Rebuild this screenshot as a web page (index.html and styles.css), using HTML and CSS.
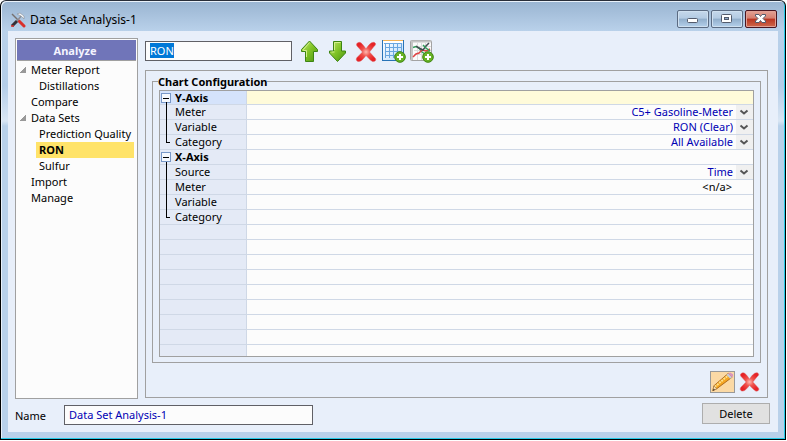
FILE: index.html
```html
<!DOCTYPE html>
<html lang="en">
<head>
<meta charset="utf-8">
<title>Data Set Analysis-1</title>
<link rel="stylesheet" href="styles.css">
</head>
<body>
<svg class="defs" aria-hidden="true">
  <defs>
    <linearGradient id="green" x1="0" y1="0" x2="1" y2="1"><stop offset="0" stop-color="#c4e86a"/><stop offset=".5" stop-color="#7fc225"/><stop offset="1" stop-color="#4a9412"/></linearGradient>
    <radialGradient id="red"><stop offset="0" stop-color="#ffb9b0"/><stop offset=".45" stop-color="#f0524c"/><stop offset="1" stop-color="#e62226"/></radialGradient>
    <linearGradient id="sheet" x1="0" y1="0" x2="1" y2="1"><stop offset="0" stop-color="#ffffff"/><stop offset="1" stop-color="#b9dcfb"/></linearGradient>
    <symbol id="cross" viewBox="0 0 22 22"><path d="M3.500 1.500C6 .5 8.500 4.500 11 8C13.500 4 16.500 .5 19.500 1.500C21.500 3 20.500 4 18.500 6L14.500 11L20.500 17.500C21.500 19.500 19.500 21 17.500 20.500C15 19 13 16.500 11 14.500C9 17 6.500 20.500 4 20.500C1.500 20.500 .5 18.500 2 16.500L7.500 11L2 5C1 3.500 1.500 2 3.500 1.500Z" fill="url(#red)" stroke="#dc5a5c" stroke-width=".5"/></symbol>
    <symbol id="plus" viewBox="0 0 12 12"><circle cx="6" cy="6" r="5.300" fill="#67b224" stroke="#3f8511"/><path d="M6 3V9M3 6H9" stroke="#fff" stroke-width="2"/></symbol>
  </defs>
</svg>
<div class="window">
  <header class="titlebar">
    <svg class="app-icon" viewBox="0 0 16 16" aria-hidden="true">
      <path d="M2 2L10 10" stroke="#77716f" stroke-width="1.500"/>
      <path d="M9 9L14 14" stroke="#d9302c" stroke-width="3" stroke-linecap="round"/>
      <path d="M12 3L7 9" stroke="#8c8f96" stroke-width="1.500"/>
      <path d="M7 9L2 14" stroke="#343037" stroke-width="3"/>
      <path d="M1 14H4" stroke="#d9302c" stroke-width="1.500"/>
      <path d="M7 2L10 1L14 4V7L11 4Z" fill="#f4f6f8" stroke="#888e98" stroke-width=".6"/>
    </svg>
    <h1>Data Set Analysis-1</h1>
    <div class="window-buttons">
      <button type="button" aria-label="Minimize"><svg viewBox="0 0 30 16"><rect x="9.500" y="7.500" width="10" height="4" rx="1" fill="#fff" stroke="#535b6c"/></svg></button>
      <button type="button" aria-label="Maximize"><svg viewBox="0 0 30 16"><rect x="9.500" y="3.500" width="10" height="8" rx="1" fill="#fff" stroke="#535b6c"/><rect x="12.500" y="6.500" width="4" height="2" fill="#8fa9c8" stroke="#535b6c"/></svg></button>
      <button type="button" class="close" aria-label="Close"><svg viewBox="0 0 30 16"><path d="M9.500 3.500H13L14.500 5.500L16 3.500H19.500V5L17 7.500L19.500 10V11.500H16L14.500 9.500L13 11.500H9.500V10L12 7.500L9.500 5Z" fill="#fff" stroke="#535b6c"/></svg></button>
    </div>
  </header>
  <div class="client">
    <div class="workspace">
      <nav class="sidebar" aria-label="Analyze">
        <h2>Analyze</h2>
        <ul>
          <li><a class="parent" href="#meter-report">Meter Report</a>
            <ul><li><a href="#distillations">Distillations</a></li></ul></li>
          <li><a href="#compare">Compare</a></li>
          <li><a class="parent" href="#data-sets">Data Sets</a>
            <ul>
              <li><a href="#prediction-quality">Prediction Quality</a></li>
              <li><a class="selected" aria-current="page" href="#ron">RON</a></li>
              <li><a href="#sulfur">Sulfur</a></li>
            </ul></li>
          <li><a href="#import">Import</a></li>
          <li><a href="#manage">Manage</a></li>
        </ul>
      </nav>
      <main>
        <div class="toolbar">
          <div class="textbox"><input type="text" class="ghost" aria-label="Data set name" value="RON"></div>
          <div class="tools">
            <button type="button" aria-label="Move up"><svg viewBox="0 0 24 24"><path d="M11.500 2L19.500 10.500V12.500H15.500V22.500H7.500V12.500H3.500V10.500Z" fill="url(#green)" stroke="#3d8512"/><path d="M11.500 3.500L5.500 10.500V11.500H8.500V18" fill="none" stroke="#d4ef8e"/></svg></button>
            <button type="button" aria-label="Move down"><svg viewBox="0 0 24 24"><path d="M11.500 22.500L19.500 14V12H15.500V2.500H7.500V12H3.500V14Z" fill="url(#green)" stroke="#3d8512"/><path d="M8.500 11V3.500H14.500M8.500 13H5.500" fill="none" stroke="#d4ef8e"/></svg></button>
            <button type="button" aria-label="Remove"><svg viewBox="0 0 24 24"><use href="#cross" x="1" y="2" width="22" height="22"/></svg></button>
            <button type="button" aria-label="Add table"><svg viewBox="0 0 24 24"><rect x=".5" y="1.500" width="21" height="20" fill="url(#sheet)" stroke="#2873b6"/><path d="M1 1.500H21" stroke="#f4b455"/><path d="M1 3H21" stroke="#fff" stroke-width="2"/><path d="M2 4.500H20M3.500 8.500H19.500M3.500 12.500H19.500M3.500 16.500H19.500M3.500 5V19M7.500 5V19M11.500 5V19M15.500 5V19M19.500 5V19" stroke="#69a6df"/><use href="#plus" x="12" y="12" width="12" height="12"/></svg></button>
            <button type="button" aria-label="Add chart"><svg viewBox="0 0 24 24"><rect x=".5" y="1.500" width="21" height="20" rx="1" fill="#fbfbfb" stroke="#a3a3a3"/><path d="M1 2.500H21M2 3V21" stroke="#c5c5c5" stroke-width="2"/><path d="M4 7.500H21M4 11.500H21M4 15.500H21M7.500 4V21M11.500 4V21M15.500 4V21" stroke="#ddd"/><path d="M3 8.500L6 7.500L9 9L12 13L15 15" fill="none" stroke="#32a05c" stroke-width="1.500"/><path d="M3 18L6 15L9 14L12 11L16 12L20 10" fill="none" stroke="#e14343" stroke-width="1.500"/><path d="M6 7L9 9L13 11L16 7L19 4" fill="none" stroke="#454b52" stroke-width="1.500"/><path d="M13 6L16 9L20 12" fill="none" stroke="#32a05c" stroke-width="1.500"/><use href="#plus" x="12" y="12" width="12" height="12"/></svg></button>
          </div>
        </div>
        <section class="panel">
          <fieldset>
            <legend>Chart Configuration</legend>
            <div class="grid">
              <table>
                <colgroup><col class="names"><col></colgroup>
                <tbody>
                <tr class="group current"><th><button type="button" class="toggle" aria-label="Collapse Y-Axis"></button>Y-Axis</th><td></td></tr>
                <tr class="child"><th><label for="y-meter">Meter</label></th><td><select id="y-meter"><option>C5+ Gasoline-Meter</option></select></td></tr>
                <tr class="child"><th><label for="y-variable">Variable</label></th><td><select id="y-variable"><option>RON (Clear)</option></select></td></tr>
                <tr class="child last"><th><label for="y-category">Category</label></th><td><select id="y-category"><option>All Available</option></select></td></tr>
                <tr class="group"><th><button type="button" class="toggle" aria-label="Collapse X-Axis"></button>X-Axis</th><td></td></tr>
                <tr class="child"><th><label for="x-source">Source</label></th><td><select id="x-source"><option>Time</option></select></td></tr>
                <tr class="child"><th>Meter</th><td class="plain">&lt;n/a&gt;</td></tr>
                <tr class="child"><th>Variable</th><td></td></tr>
                <tr class="child last"><th>Category</th><td></td></tr>
                <tr><th></th><td></td></tr>
                <tr><th></th><td></td></tr>
                <tr><th></th><td></td></tr>
                <tr><th></th><td></td></tr>
                <tr><th></th><td></td></tr>
                <tr><th></th><td></td></tr>
                <tr><th></th><td></td></tr>
                <tr><th></th><td></td></tr>
                <tr><th></th><td></td></tr>
                </tbody>
              </table>
            </div>
          </fieldset>
          <div class="panel-actions">
            <button type="button" class="edit" aria-label="Edit"><svg viewBox="0 0 24 20"><path d="M2 19L3 14L18 1L22 5L6 17Z" fill="#f5a623" stroke="#ad6a1c"/><path d="M4 15L18 3" stroke="#ffe08a" stroke-width="2" stroke-dasharray="2 1"/><path d="M2 19L3 14L6 17Z" fill="#f5dfb4" stroke="#906030" stroke-width=".5"/><path d="M1.500 19.500L3 17L4 18Z" fill="#222"/><path d="M16 2.500L18 1L22 5L20 6.500Z" fill="#c5cbd8"/><path d="M18 1L20 0L23 2V4L22 5Z" fill="#d995bd"/></svg></button>
            <button type="button" class="discard" aria-label="Discard"><svg viewBox="0 0 22 22"><use href="#cross" width="22" height="22"/></svg></button>
          </div>
        </section>
      </main>
    </div>
    <footer>
      <label for="name">Name</label>
      <input type="text" id="name" value="Data Set Analysis-1">
      <button type="button" class="delete">Delete</button>
    </footer>
  </div>
</div>
<script src="app.js"></script>
</body>
</html>
```
FILE: app.js
```js
const field = document.querySelector(".ghost");
field.focus();
field.select();
```
FILE: styles.css
```css
* { box-sizing: border-box; }

body {
  display: flex;
  height: 100vh;
  margin: 0;
  padding: 0 1px 1px 0;
  background: #fff;
  color: #000;
  font: 11px/15px "Noto Sans", "Open Sans", sans-serif;
}

button, input, select { margin: 0; font: inherit; }
button { padding: 0; border: 0; background: none; }
svg { display: block; }
h1, h2, ul { margin: 0; padding: 0; font-weight: normal; }
ul { list-style: none; }
.defs { position: absolute; width: 0; height: 0; }

.window {
  display: flex;
  flex: 1;
  flex-direction: column;
  min-width: 0;
  padding: 0 7px 7px 7px;
  border: 1px solid #000;
  border-top-color: #282d38;
  border-radius: 6px 6px 0 0;
  background: linear-gradient(#99b4d1 0, #b9d1ea 30px, #b4cde8 85px, #d9e6f4 120px, #b9d1ea 125px);
  box-shadow: inset -1px -1px #26cbe8, inset 1px 1px #e9f1fa;
}

.titlebar {
  display: flex;
  align-items: center;
  height: 30px;
  padding: 8px 1px 0 2px;
  gap: 4px;
}
.titlebar h1 { flex: 1; font-size: 12px; line-height: 22px; }
.app-icon { width: 16px; height: 16px; }

.window-buttons { display: flex; margin-bottom: 2px; gap: 2px; }
.window-buttons button {
  width: 32px;
  height: 18px;
  border: 1px solid #5b6b82;
  border-radius: 2px;
  background: linear-gradient(#c5d8eb 0, #b3cbe3 45%, #91aecb 50%, #b4d0eb 100%);
  box-shadow: inset 0 0 0 1px #cfe0f0;
}
.window-buttons .close {
  border-color: #4a1520;
  background: linear-gradient(#e3a295 0, #d67e6f 45%, #b93420 50%, #cf694d 100%);
  box-shadow: inset 0 0 0 1px #e0a095;
}
.window-buttons svg { width: 30px; height: 16px; }

.client {
  display: flex;
  flex: 1;
  flex-direction: column;
  min-height: 0;
  padding: 7px 9px 7px 7px;
  background: #e8effa;
}
.workspace { display: flex; flex: 1; gap: 7px; min-height: 0; }

.sidebar {
  width: 123px;
  padding: 1px;
  border: 1px solid #a0a0a0;
  background: #fcfcfc;
}
.sidebar h2 {
  height: 21px;
  margin-bottom: 1px;
  border-bottom: 1px solid #a0a0a0;
  background: #7075b9;
  color: #f4f4ff;
  font-size: 11px;
  font-weight: bold;
  line-height: 22px;
  padding-right: 3px;
  text-align: center;
}
.sidebar a {
  display: block;
  margin-right: 2px;
  padding-left: 14px;
  color: #000;
  line-height: 16px;
  text-decoration: none;
  white-space: nowrap;
}
.sidebar ul ul a { margin-left: 19px; padding-left: 3px; }
.sidebar .parent::before {
  content: "";
  float: left;
  width: 6px;
  height: 6px;
  margin: 5px 0 0 -11px;
  background: linear-gradient(135deg, transparent 45%, #999 50%);
}
.sidebar a.selected { background: #ffe369; font-weight: bold; }

main {
  display: flex;
  flex: 1;
  flex-direction: column;
  min-width: 0;
  padding: 0 1px 1px 0;
}
.toolbar { display: flex; height: 32px; gap: 7px; }
.textbox { padding-top: 3px; }
input {
  height: 20px;
  padding: 0 4px 2px;
  border: 1px solid #606066;
  border-radius: 0;
  outline: 0;
  background: #fcfcfc;
}
.ghost { display: block; width: 147px; color: #0000b4; }
.ghost::selection { background: #0078d7; color: #fff; }
.tools { display: flex; align-items: flex-start; padding-top: 1px; gap: 4px; margin-left: -1px; }
.tools svg { width: 24px; height: 24px; }

.panel {
  display: flex;
  flex: 1;
  flex-direction: column;
  min-height: 0;
  padding: 3px 6px 4px 6px;
  border: 1px solid #a0a0a0;
}
fieldset {
  flex: 1;
  min-width: 0;
  min-height: 0;
  margin: 0;
  padding: 1px 6px 5px;
  border: 1px solid #a0a0a0;
}
legend { margin-left: -1px; padding: 0; font-weight: bold; line-height: 15px; }
.grid {
  height: 100%;
  overflow: hidden;
  border: 1px solid #a0a0a0;
  background: linear-gradient(90deg, #e4eaf6 86px, #fcfcfc 86px);
}
table { width: 100%; border-collapse: separate; border-spacing: 0; table-layout: fixed; }
.names { width: 87px; }
th, td {
  height: 15px;
  padding: 0;
  border-bottom: 1px solid #cfd8e6;
  line-height: 14px;
  white-space: nowrap;
}
th {
  position: relative;
  padding-left: 15px;
  border-right: 1px solid #cfd8e6;
  background: #e4eaf6;
  font-weight: normal;
  text-align: left;
}
td { background: #fcfcfc; text-align: right; }
.group th { font-weight: bold; }
.current th { background: #d5e3fb; }
.current td { background: #fffbda; }
.current th, .current td { height: 14px; line-height: 13px; }
td.plain { padding-right: 21px; }

.toggle {
  position: absolute;
  top: 2px;
  left: 1px;
  width: 10px;
  height: 10px;
  border: 1px solid #7898c8;
  background: linear-gradient(#000, #000) center / 6px 1px no-repeat #f5f8fd;
}
.child th::before {
  content: "";
  position: absolute;
  top: -3px;
  bottom: -1px;
  left: 6px;
  width: 3px;
  border-left: 1px solid #000;
}
.child.last th::before { bottom: 6px; border-bottom: 1px solid #000; }

select {
  display: block;
  width: 100%;
  height: 14px;
  padding: 0 20px 0 0;
  border: 0;
  appearance: none;
  background: url("data:image/svg+xml,%3Csvg xmlns='http://www.w3.org/2000/svg' width='17' height='14'%3E%3Cpath fill='%23f0f0f0' d='M0 0h17v14H0z'/%3E%3Cpath d='M4.500 5.500l3.500 3 3.500-3' fill='none' stroke='%23555' stroke-width='2'/%3E%3C/svg%3E") right center no-repeat;
  color: #0000b4;
  line-height: 14px;
  text-align-last: right;
}

.panel-actions {
  display: flex;
  justify-content: flex-end;
  height: 30px;
  padding: 8px 1px 0 0;
  gap: 4px;
}
.edit { width: 25px; height: 22px; border: 1px solid #999; background: #fbd9a5; }
.edit svg { width: 23px; height: 20px; }
.discard svg { width: 21px; height: 22px; }

footer { display: flex; height: 26px; padding-top: 4px; }
footer label { width: 49px; padding-top: 5px; }
footer input { width: 249px; margin-top: 2px; color: #0000b4; }
.delete {
  width: 68px;
  height: 21px;
  margin-left: auto;
  margin-right: -1px;
  border: 1px solid #adadad;
  background: #e1e1e1;
}
```
